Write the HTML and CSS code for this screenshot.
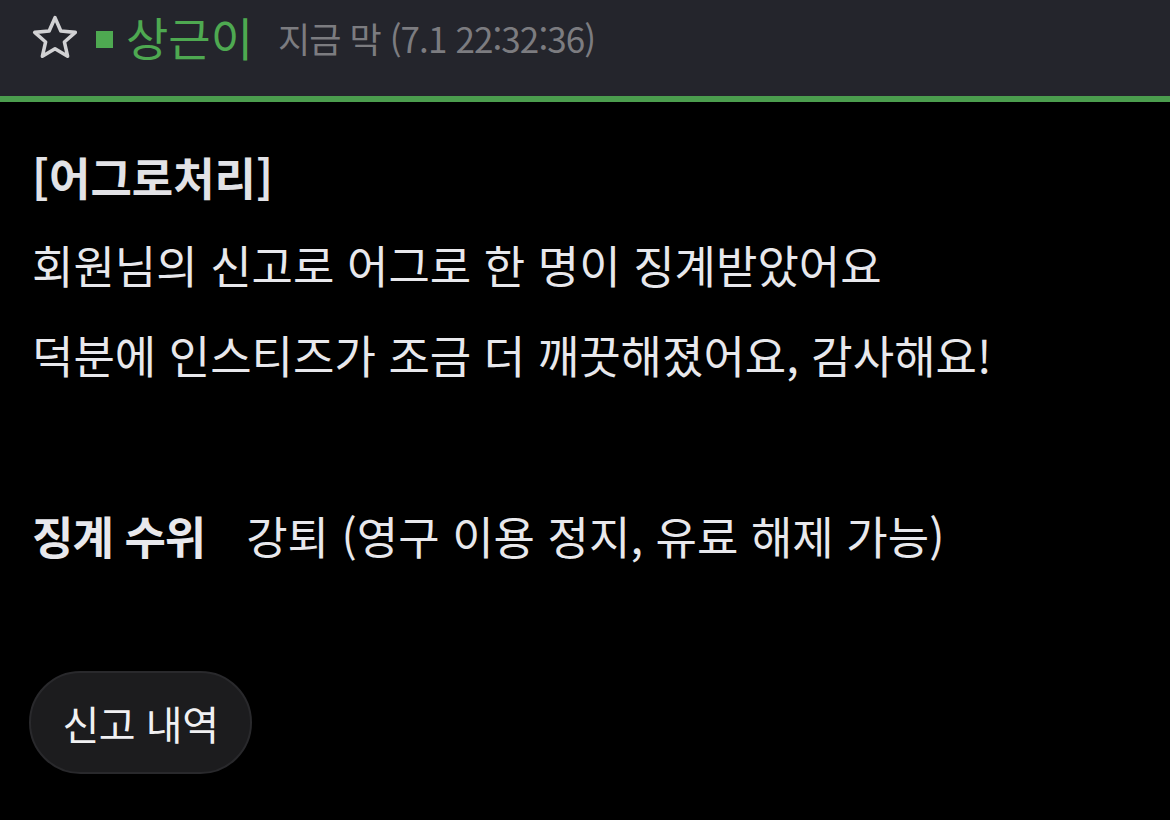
FILE: index.html
```html
<!DOCTYPE html>
<html lang="ko">
<head>
<meta charset="utf-8">
<link rel="stylesheet" href="styles.css">
</head>
<body>
<header class="top">
  <svg class="star" viewBox="0 0 48 48" width="50" height="50">
    <path d="M24 4.5 L29.6 17.3 L43.5 18.6 L33 27.8 L36.1 41.5 L24 34.3 L11.9 41.5 L15 27.8 L4.5 18.6 L18.4 17.3 Z" fill="none" stroke="#d2d2d4" stroke-width="3.4" stroke-linejoin="round"/>
  </svg>
  <span class="dot"></span>
  <span class="name">상근이</span>
  <span class="time">지금 막 (7.1 22:32:36)</span>
</header>
<main class="content">
  <p class="title">[어그로처리]</p>
  <p class="line">회원님의 신고로 어그로 한 명이 징계받았어요</p>
  <p class="line">덕분에 인스티즈가 조금 더 깨끗해졌어요, 감사해요!</p>
  <p class="line level"><span class="label">징계 수위</span><span class="value">강퇴 (영구 이용 정지, 유료 해제 가능)</span></p>
  <button class="btn">신고 내역</button>
</main>
</body>
</html>
```
FILE: styles.css
```css
html, body {
  margin: 0;
  padding: 0;
  background: #000;
  width: 1170px;
  height: 820px;
  overflow: hidden;
  font-family: "Noto Sans CJK KR", "Noto Sans", sans-serif;
}
.top {
  box-sizing: border-box;
  height: 102px;
  padding: 0 0 20px 30px;
  background: #24252c;
  border-bottom: 6px solid #4b9d4e;
  display: flex;
  align-items: center;
}
.star {
  display: block;
}
.dot {
  width: 17px;
  height: 17px;
  background: #4ea951;
  margin-left: 16px;
  margin-top: 2px;
}
.name {
  color: #4ea951;
  font-size: 46px;
  line-height: 1;
  margin-left: 13px;
  margin-top: -4px;
}
.time {
  color: #7c7c80;
  font-size: 35px;
  line-height: 1;
  margin-left: 25px;
  margin-top: -2px;
  letter-spacing: -0.9px;
}
.content {
  padding: 32px 0 0 32px;
  color: #e8e8ec;
}
p {
  margin: 0;
}
.title {
  font-size: 45px;
  font-weight: 700;
  line-height: 86px;
  color: #e2e2e6;
}
.line {
  font-size: 45px;
  line-height: 90px;
}
.level {
  margin-top: 91px;
  display: flex;
}
.label {
  font-weight: 700;
  letter-spacing: -1px;
  margin-right: 41px;
}
.btn {
  margin-top: 90px;
  width: 223px;
  height: 103px;
  border-radius: 52px;
  background: #1c1c1e;
  border: 2px solid #29292c;
  color: #f0f0f2;
  font-family: inherit;
  font-size: 40px;
  letter-spacing: -0.5px;
  padding: 0;
  margin-left: -3px;
  display: block;
}
```
